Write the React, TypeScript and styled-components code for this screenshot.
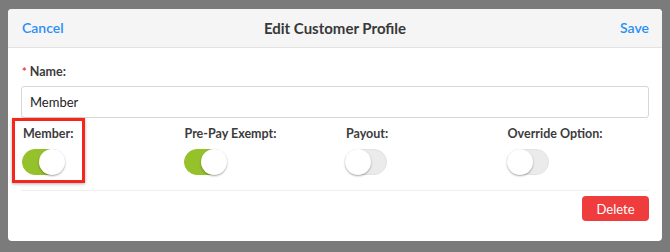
import React from "react";
import styled, { createGlobalStyle } from "styled-components";

const Global = createGlobalStyle`
  html, body { margin: 0; padding: 0; }
  body {
    width: 670px; height: 252px; overflow: hidden;
    background: #7b7b7b;
    font-family: Lato, "Open Sans", sans-serif;
  }
`;

const Backdrop = styled.div`
  width: 670px;
  height: 252px;
  padding: 9px 8px 0 8px;
  box-sizing: border-box;
`;

const Modal = styled.div`
  position: relative;
  width: 654px;
  height: 232px;
  background: #fff;
  border-radius: 4px;
  overflow: hidden;
  display: flex;
  flex-direction: column;
`;

const Header = styled.div`
  height: 38px;
  background: #f5f5f5;
  border-bottom: 1px solid #e2e2e2;
  display: flex;
  align-items: center;
  justify-content: space-between;
  padding: 0 13px 0 14px;
  position: relative;
`;

const LinkButton = styled.span`
  color: #2b8ff5;
  font-size: 14px;
  font-weight: 600;
  margin-top: -2px;
`;

const Title = styled.div`
  position: absolute;
  left: 0;
  right: 0;
  text-align: center;
  font-size: 15px;
  font-weight: 700;
  color: #383838;
  pointer-events: none;
`;

const Body = styled.div`
  padding: 16px 13px 0 13px;
  display: flex;
  flex-direction: column;
`;

const Label = styled.div`
  font-size: 12.5px;
  font-weight: 700;
  color: #3c3c3c;
  line-height: 16px;
  margin-left: 1px;
`;

const Star = styled.span`
  color: #e53935;
  margin-right: 3px;
  font-size: 11px;
`;

const Input = styled.div`
  margin-top: 6px;
  height: 32px;
  border: 1px solid #d6d6d6;
  border-radius: 3px;
  box-sizing: border-box;
  display: flex;
  align-items: center;
  padding-left: 8px;
  font-size: 13px;
  color: #222;
`;

const ToggleRow = styled.div`
  margin-top: 8px;
  display: grid;
  grid-template-columns: repeat(4, 161.5px);
  padding-bottom: 15px;
  border-bottom: 1px solid #efefef;
`;

const ToggleCell = styled.div`
  position: relative;
  display: flex;
  flex-direction: column;
  gap: 7px;
  padding-left: 1px;
`;

const Track = styled.div<{ $on: boolean }>`
  width: 42px;
  height: 26px;
  border-radius: 13px;
  background: ${(p) => (p.$on ? "#95c12b" : "#ebebeb")};
  position: relative;
  box-sizing: border-box;
  border: 1px solid ${(p) => (p.$on ? "#95c12b" : "#e2e2e2")};
`;

const Knob = styled.div<{ $on: boolean }>`
  position: absolute;
  top: -1px;
  left: ${(p) => (p.$on ? "16px" : "-1px")};
  width: 26px;
  height: 26px;
  border-radius: 50%;
  background: #fff;
  box-shadow: 0 1px 2px rgba(0, 0, 0, 0.35);
`;

const Highlight = styled.div`
  position: absolute;
  left: -9px;
  top: -8px;
  width: 73px;
  height: 65px;
  box-sizing: border-box;
  border: 3px solid #f5261b;
  box-shadow: 0 1px 3px rgba(0, 0, 0, 0.3);
`;

const Footer = styled.div`
  display: flex;
  justify-content: flex-end;
  padding-top: 5px;
`;

const DeleteButton = styled.button`
  width: 67px;
  height: 25px;
  border: none;
  border-radius: 4px;
  background: #ef3d3e;
  color: #fff;
  font-family: Lato, sans-serif;
  font-size: 13px;
  padding: 0;
`;

const toggles = [
  { label: "Member:", on: true, highlight: true },
  { label: "Pre-Pay Exempt:", on: true },
  { label: "Payout:", on: false },
  { label: "Override Option:", on: false },
];

export default function App() {
  return (
    <>
      <Global />
      <Backdrop>
        <Modal>
          <Header>
            <LinkButton>Cancel</LinkButton>
            <Title>Edit Customer Profile</Title>
            <LinkButton>Save</LinkButton>
          </Header>
          <Body>
            <Label>
              <Star>*</Star>Name:
            </Label>
            <Input>Member</Input>
            <ToggleRow>
              {toggles.map((t) => (
                <ToggleCell key={t.label}>
                  <Label>{t.label}</Label>
                  <Track $on={t.on}>
                    <Knob $on={t.on} />
                  </Track>
                  {t.highlight && <Highlight />}
                </ToggleCell>
              ))}
            </ToggleRow>
            <Footer>
              <DeleteButton>Delete</DeleteButton>
            </Footer>
          </Body>
        </Modal>
      </Backdrop>
    </>
  );
}
